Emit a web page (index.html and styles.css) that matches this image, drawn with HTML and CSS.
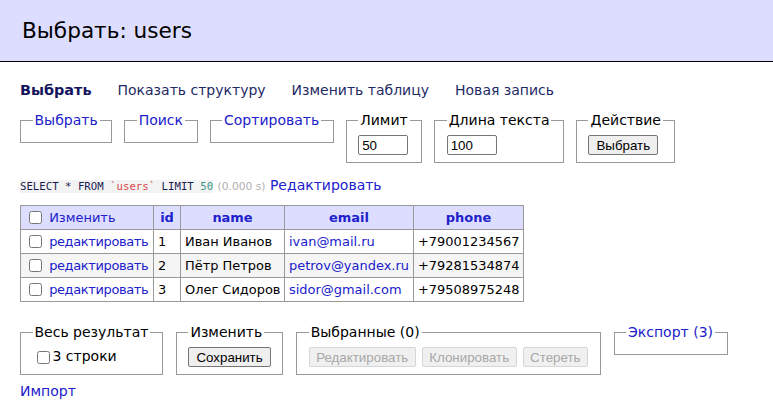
FILE: index.html
```html
<!DOCTYPE html>
<html lang="ru">
<head>
<meta charset="utf-8">
<title>Выбрать: users</title>
<link rel="stylesheet" href="styles.css">
</head>
<body>
<h2 class="title">Выбрать: users</h2>
<div class="content">
  <p class="links">
    <a class="active" href="#">Выбрать</a>
    <a class="visited" href="#">Показать структуру</a>
    <a class="visited" href="#">Изменить таблицу</a>
    <a class="visited" href="#">Новая запись</a>
  </p>
  <form class="filters">
    <fieldset class="box"><legend><a href="#">Выбрать</a></legend></fieldset>
    <fieldset class="box"><legend><a href="#">Поиск</a></legend></fieldset>
    <fieldset class="box"><legend><a href="#">Сортировать</a></legend></fieldset>
    <fieldset class="box"><legend>Лимит</legend><input class="size" type="text" value="50"></fieldset>
    <fieldset class="box"><legend>Длина текста</legend><input class="size" type="text" value="100"></fieldset>
    <fieldset class="box"><legend>Действие</legend><button class="btn" type="button">Выбрать</button></fieldset>
  </form>
  <p class="query"><code class="sql"><span class="kw">SELECT</span> * <span class="kw">FROM</span> <span class="bac">`users`</span> <span class="kw">LIMIT</span> <span class="num">50</span></code> <span class="time">(0.000 s)</span> <a href="#">Редактировать</a></p>
  <table class="grid">
    <colgroup>
      <col class="w-edit"><col class="w-id"><col class="w-name"><col class="w-email"><col class="w-phone">
    </colgroup>
    <thead>
      <tr>
        <td><input type="checkbox"> <a href="#">Изменить</a></td>
        <th><a href="#">id</a></th>
        <th><a href="#">name</a></th>
        <th><a href="#">email</a></th>
        <th><a href="#">phone</a></th>
      </tr>
    </thead>
    <tbody>
      <tr>
        <td><input type="checkbox"> <a class="edit" href="#">редактировать</a></td>
        <td>1</td><td>Иван Иванов</td><td><a href="#">ivan@mail.ru</a></td><td>+79001234567</td>
      </tr>
      <tr class="odd">
        <td><input type="checkbox"> <a class="edit" href="#">редактировать</a></td>
        <td>2</td><td>Пётр Петров</td><td><a href="#">petrov@yandex.ru</a></td><td>+79281534874</td>
      </tr>
      <tr>
        <td><input type="checkbox"> <a class="edit" href="#">редактировать</a></td>
        <td>3</td><td>Олег Сидоров</td><td><a href="#">sidor@gmail.com</a></td><td>+79508975248</td>
      </tr>
    </tbody>
  </table>
  <div class="footer">
    <fieldset class="box"><legend>Весь результат</legend><label class="all"><input type="checkbox">3 строки</label></fieldset>
    <fieldset class="box"><legend>Изменить</legend><button class="btn" type="button">Сохранить</button></fieldset>
    <fieldset class="box"><legend>Выбранные (0)</legend><div class="btns"><button class="btn" type="button" disabled>Редактировать</button><button class="btn" type="button" disabled>Клонировать</button><button class="btn" type="button" disabled>Стереть</button></div></fieldset>
    <fieldset class="box"><legend><a href="#">Экспорт (3)</a></legend></fieldset>
  </div>
  <p class="import"><a href="#">Импорт</a></p>
</div>
</body>
</html>
```
FILE: styles.css
```css
html, body {
  margin: 0;
  padding: 0;
  background: #fff;
  color: #000;
}
body {
  font: 14px/18px "DejaVu Sans", Verdana, sans-serif;
}
a {
  color: #2020cc;
  text-decoration: none;
}
.title {
  margin: 0 0 19px 0;
  padding: 17px 22px;
  font-size: 21.6px;
  line-height: 27px;
  font-weight: normal;
  background: #ddf;
  border-bottom: 1px solid #000;
}
.content {
  padding: 0 20px;
}
.links {
  margin: 0;
  display: flex;
  gap: 26px;
}
.links a {
  color: #1e2a66;
  white-space: nowrap;
}
.links a.active {
  font-weight: bold;
  color: #14145e;
  font-size: 14.4px;
}
.filters, .footer {
  display: flex;
  flex-wrap: nowrap;
  align-items: flex-start;
  gap: 12px;
}
.box {
  margin: 12px 0 0 0;
  padding: 6px 11.5px 7px;
  border: 1px solid #999;
  min-width: 0;
}
.box legend {
  padding: 0 2px;
}
.size {
  width: 50px;
  box-sizing: border-box;
  font: 13.33px "Liberation Sans", Arial, sans-serif;
  height: 20px;
  padding: 1px 3px;
  border: 1px solid #767676;
  border-radius: 2px;
  margin: 0;
  vertical-align: middle;
}
.btn {
  font: 13.33px "Liberation Sans", Arial, sans-serif;
  height: 20px;
  padding: 1px 7px;
  margin: 0;
  background: #efefef;
  color: #000;
  border: 1px solid #767676;
  border-radius: 2px;
  vertical-align: middle;
}
.btn:disabled {
  padding: 1px 6.5px;
  color: #a8a8a8;
  background: #f0f0f0;
  border-color: #d6d6d6;
}
.btns {
  display: flex;
  gap: 6px;
}
.query {
  margin: 13px 0 0 0;
}
.sql {
  font: 10.7px/1.25 "DejaVu Sans Mono", "Liberation Mono", monospace;
  background: #f3f3f3;
  color: #1a1a50;
}
.sql .bac {
  color: #d9464a;
}
.sql .num {
  color: #3a9a8a;
}
.time {
  color: #b0b0b0;
  font-size: 10.7px;
}
.grid {
  margin: 9px 0 0 0;
  border-collapse: collapse;
  table-layout: fixed;
  width: 503px;
  font-size: 12.96px;
  line-height: 16px;
}
.w-edit { width: 133px; }
.w-id { width: 27px; }
.w-name { width: 104px; }
.w-email { width: 129px; }
.w-phone { width: 110px; }
.grid tr {
  height: 24px;
}
.grid td, .grid th {
  border: 1px solid #999;
  padding: 2px 4px;
  white-space: nowrap;
  overflow: hidden;
  text-align: left;
}
.grid thead td, .grid thead th {
  background: #ddf;
}
.grid thead th {
  text-align: center;
}
.grid thead th a {
  font-weight: bold;
}
.grid input[type=checkbox] {
  margin: 0 3px 0 4px;
  vertical-align: -2px;
}
.grid .edit {
  letter-spacing: -0.35px;
}
.grid .odd td {
  background: #f5f5f5;
}
.footer {
  margin-top: 21px;
  gap: 13px;
}
.footer .box {
  margin-top: 0;
}
.all input {
  margin: 3px 3px 3px 4px;
  vertical-align: -3px;
}
.import {
  margin: 7px 0 0 0;
}
```
